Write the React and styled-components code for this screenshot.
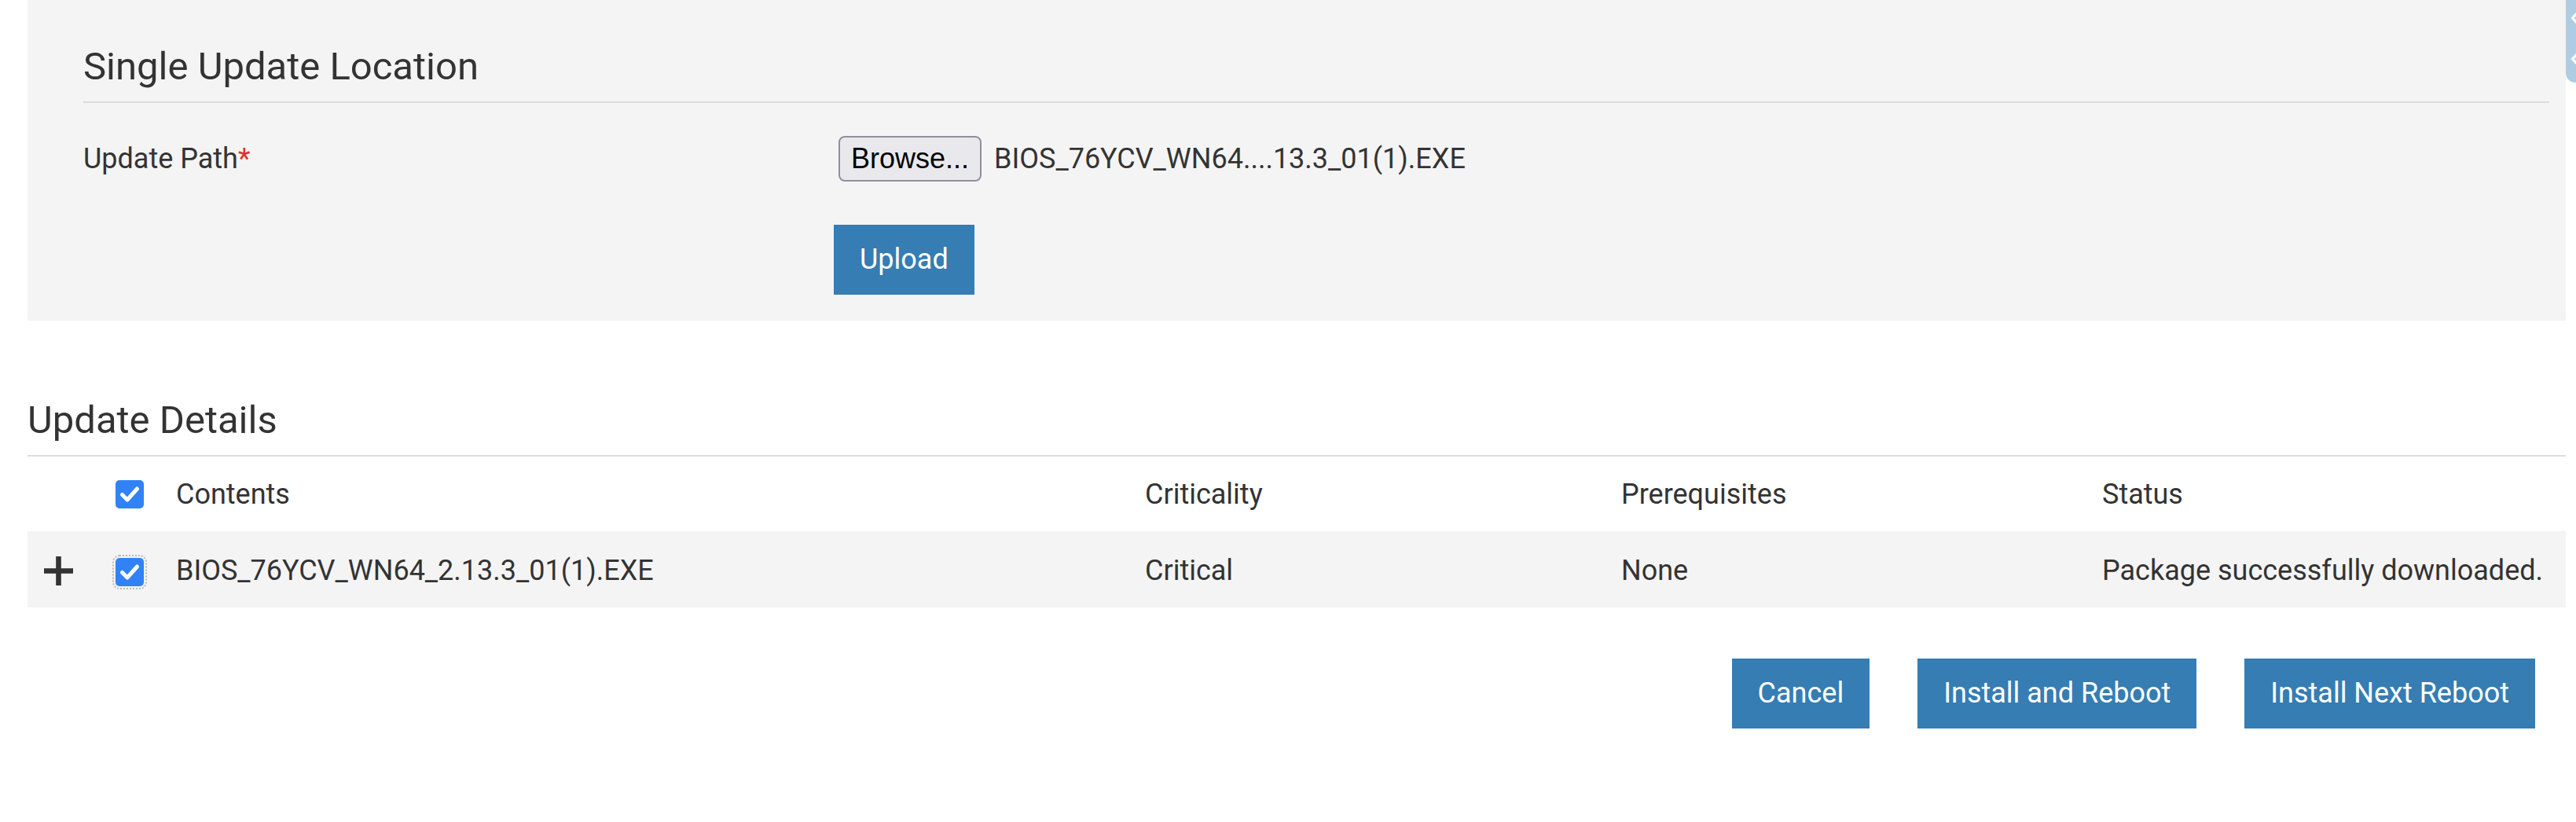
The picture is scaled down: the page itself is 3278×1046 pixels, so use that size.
import React from "react";
import styled, { createGlobalStyle } from "styled-components";

const GlobalStyle = createGlobalStyle`
  html, body {
    margin: 0;
    padding: 0;
    background: #ffffff;
  }
  body {
    font-family: Roboto, "Helvetica Neue", Arial, sans-serif;
    color: #333333;
  }
`;

const BODY_SIZE = "36px";

const Page = styled.div`
  position: relative;
  padding: 0 13px 0 35px;
  min-height: 1046px;
  box-sizing: border-box;
`;

const SideTab = styled.div`
  position: absolute;
  top: 0;
  right: 0;
  width: 13px;
  height: 105px;
  background: #aecde3;
  border-bottom-left-radius: 12px;
  overflow: hidden;
  svg { display: block; }
`;

const Panel = styled.section`
  background: #f4f4f4;
  padding: 57px 21px 33px 71px;
`;

const SectionTitle = styled.h2`
  margin: ${(p) => (p.$spaced ? "99px 0 0" : "0")};
  padding: 0 0 17px;
  font-size: 49px;
  line-height: 55px;
  font-weight: 400;
  color: #333333;
  border-bottom: 2px solid #dddddd;
`;

const FormGrid = styled.div`
  display: grid;
  grid-template-columns: 955px 1fr;
  row-gap: 55px;
  align-items: center;
  margin-top: 42px;
`;

const Label = styled.label`
  font-size: ${BODY_SIZE};
  line-height: 45px;
  color: #333333;
`;

const Req = styled.span`
  color: #e3312b;
`;

const FileField = styled.div`
  display: flex;
  align-items: center;
  gap: 16px;
  padding-left: 6px;
`;

const BrowseButton = styled.button`
  height: 58px;
  box-sizing: border-box;
  padding: 0 14px;
  background: #e9e9ed;
  border: 2px solid #8f8f9d;
  border-radius: 8px;
  font-family: "Liberation Sans", Arial, sans-serif;
  font-size: 36px;
  color: #000000;
  line-height: 1;
`;

const FileName = styled.span`
  font-size: ${BODY_SIZE};
  line-height: 45px;
  color: #333333;
`;

const PrimaryButton = styled.button`
  height: 89px;
  padding: 0 33px;
  border: none;
  border-radius: 0;
  background: #357db3;
  color: #ffffff;
  font-family: Roboto, "Helvetica Neue", Arial, sans-serif;
  font-size: ${BODY_SIZE};
  line-height: 45px;
  font-weight: 400;
  white-space: nowrap;
  justify-self: start;
`;

const Table = styled.div`
  display: grid;
  grid-template-columns: 89px 100px 1233px 606px 612px 1fr;
`;

const Row = styled.div`
  display: contents;
`;

const Cell = styled.div`
  height: ${(p) => (p.$body ? "97px" : "95px")};
  display: flex;
  align-items: center;
  padding-top: ${(p) => (p.$body ? "3px" : "2px")};
  box-sizing: border-box;
  background: ${(p) => (p.$body ? "#f4f4f4" : "transparent")};
  padding-left: ${(p) => p.$indent || 0}px;
  font-size: ${BODY_SIZE};
  line-height: 45px;
  color: #333333;
  white-space: nowrap;
`;

const CheckBox = styled.span`
  display: inline-flex;
  align-items: center;
  justify-content: center;
  width: 36px;
  height: 36px;
  border-radius: 5px;
  background: #3182f6;
  margin-top: ${(p) => (p.$focused ? "3px" : "-2px")};
  outline: ${(p) => (p.$focused ? "2px dotted #b8b8b8" : "none")};
  outline-offset: 2px;
  svg { display: block; }
`;

const Actions = styled.div`
  display: flex;
  justify-content: flex-end;
  gap: 61px;
  margin-top: 65px;
  padding-right: 39px;
`;

const Check = ({ focused }) => (
  <CheckBox role="checkbox" aria-checked="true" $focused={focused}>
    <svg width="36" height="36" viewBox="0 0 36 36">
      <path
        d="M8.5 18.5 L15 25 L27.5 11"
        fill="none"
        stroke="#ffffff"
        strokeWidth="5"
        strokeLinecap="round"
        strokeLinejoin="round"
      />
    </svg>
  </CheckBox>
);

const PlusIcon = () => (
  <svg width="37" height="37" viewBox="0 0 37 37" aria-label="expand">
    <rect x="0" y="15.2" width="37" height="6.6" fill="#333333" />
    <rect x="15.2" y="0" width="6.6" height="37" fill="#333333" />
  </svg>
);

export default function App() {
  return (
    <>
      <GlobalStyle />
      <Page>
        <SideTab>
          <svg width="13" height="105" viewBox="0 0 13 105">
            <path d="M14 17 L8.5 23 L14 29" fill="none" stroke="#ffffff" strokeWidth="3.2" strokeLinejoin="round" />
            <path d="M14 69 L8.5 75 L14 81" fill="none" stroke="#ffffff" strokeWidth="3.2" strokeLinejoin="round" />
          </svg>
        </SideTab>

        <Panel>
          <SectionTitle>Single Update Location</SectionTitle>
          <FormGrid>
            <Label>
              Update Path<Req>*</Req>
            </Label>
            <FileField>
              <BrowseButton type="button">Browse...</BrowseButton>
              <FileName>BIOS_76YCV_WN64....13.3_01(1).EXE</FileName>
            </FileField>
            <span />
            <PrimaryButton type="button">Upload</PrimaryButton>
          </FormGrid>
        </Panel>

        <SectionTitle $spaced>Update Details</SectionTitle>

        <Table>
          <Row>
            <Cell />
            <Cell $indent={23}>
              <Check />
            </Cell>
            <Cell>Contents</Cell>
            <Cell>Criticality</Cell>
            <Cell>Prerequisites</Cell>
            <Cell>Status</Cell>
          </Row>
          <Row>
            <Cell $body $indent={21}>
              <PlusIcon />
            </Cell>
            <Cell $body $indent={23}>
              <Check focused />
            </Cell>
            <Cell $body>BIOS_76YCV_WN64_2.13.3_01(1).EXE</Cell>
            <Cell $body>Critical</Cell>
            <Cell $body>None</Cell>
            <Cell $body>Package successfully downloaded.</Cell>
          </Row>
        </Table>

        <Actions>
          <PrimaryButton type="button">Cancel</PrimaryButton>
          <PrimaryButton type="button">Install and Reboot</PrimaryButton>
          <PrimaryButton type="button">Install Next Reboot</PrimaryButton>
        </Actions>
      </Page>
    </>
  );
}
